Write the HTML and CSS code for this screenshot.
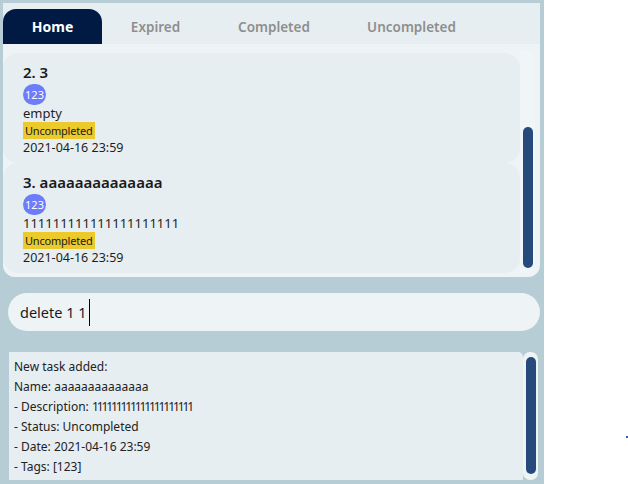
FILE: index.html
```html
<!DOCTYPE html>
<html>
<head>
<meta charset="utf-8">
<link rel="stylesheet" href="styles.css">
</head>
<body>
<div class="app">
  <div class="tabs">
    <div class="tab active w-home">Home</div>
    <div class="tab w-exp">Expired</div>
    <div class="tab w-comp">Completed</div>
    <div class="tab w-unc">Uncompleted</div>
  </div>
  <div class="list-panel">
    <div class="list">
      <div class="card first">
        <div class="title">2. 3</div>
        <div class="tags"><span class="tag">123</span></div>
        <div class="desc">empty</div>
        <div class="status"><span class="badge">Uncompleted</span></div>
        <div class="date">2021-04-16 23:59</div>
      </div>
      <div class="card">
        <div class="title">3. aaaaaaaaaaaaaa</div>
        <div class="tags"><span class="tag">123</span></div>
        <div class="desc">111111111111111111111</div>
        <div class="status"><span class="badge">Uncompleted</span></div>
        <div class="date">2021-04-16 23:59</div>
      </div>
    </div>
    <div class="list-track"><div class="list-thumb"></div></div>
  </div>
  <div class="command">
    <span class="cmd-text">delete 1 1</span><span class="caret"></span>
  </div>
  <div class="result">
    <div class="result-text">
      <div>New task added:</div>
      <div>Name: aaaaaaaaaaaaaa</div>
      <div>- Description: <span class="ones">111111111111111111111</span></div>
      <div>- Status: Uncompleted</div>
      <div>- Date: 2021-04-16 23:59</div>
      <div>- Tags: [123]</div>
    </div>
    <div class="result-track"><div class="result-thumb"></div></div>
  </div>
</div>
<div class="dot"></div>
</body>
</html>
```
FILE: styles.css
```css
html, body {
  margin: 0;
  padding: 0;
}
body {
  width: 628px;
  height: 484px;
  background: #ffffff;
  overflow: hidden;
  position: relative;
  font-family: "Noto Sans", "Open Sans", sans-serif;
}
.app {
  width: 544px;
  height: 484px;
  box-sizing: border-box;
  background: #b6cdd5;
  padding: 3px 4px 0 3px;
  display: flex;
  flex-direction: column;
}
.tabs {
  height: 41px;
  background: #e6eef1;
  display: flex;
  align-items: flex-end;
  flex-shrink: 0;
}
.tab {
  height: 35px;
  display: flex;
  align-items: center;
  justify-content: center;
  font-size: 13.5px;
  font-weight: 600;
  color: #8e8e8e;
}
.tab.active {
  background: #011a43;
  color: #ffffff;
  border-radius: 13px 13px 0 0;
  font-size: 14px;
  font-weight: 700;
}
.w-home { width: 99px; }
.w-exp { width: 107px; }
.w-comp { width: 130px; }
.w-unc { width: 145px; }

.list-panel {
  height: 233px;
  background: #eef3f6;
  border-radius: 0 0 12px 12px;
  display: flex;
  flex-shrink: 0;
  overflow: hidden;
}
.list {
  width: 517px;
  padding-top: 9px;
  box-sizing: border-box;
}
.card {
  background: #e6eef1;
  border-radius: 15px;
  height: 110px;
  box-sizing: border-box;
  padding: 9px 0 5px 20px;
  color: #1e1e1e;
}
.title {
  font-size: 15px;
  font-weight: 600;
  line-height: 20px;
  color: #1a1a1a;
}
.tags {
  margin-top: 4px;
  height: 18px;
  display: flex;
}
.tag {
  width: 23px;
  height: 21px;
  margin-top: -2px;
  border-radius: 11px;
  background: #6c7cfb;
  color: #ffffff;
  font-size: 11px;
  line-height: 21px;
  text-align: center;
}
.desc {
  font-size: 13px;
  line-height: 18px;
}
.status {
  height: 17px;
  display: flex;
}
.badge {
  background: #ecca2c;
  color: #1a1a1a;
  font-size: 11px;
  line-height: 17px;
  padding: 0 2px;
  letter-spacing: -0.2px;
}
.date {
  font-size: 12.5px;
  line-height: 18px;
}
.list-track {
  width: 15px;
  margin: 6px 0 5px 0;
  background: #f0f5f7;
  border-radius: 0 10px 10px 0;
  padding: 77px 2px 4px 3px;
  box-sizing: border-box;
}
.list-thumb {
  height: 100%;
  background: #264a7b;
  border-radius: 5px;
}

.command {
  margin: 16px 0 0 5px;
  height: 38px;
  flex-shrink: 0;
  background: #eef3f6;
  border-radius: 19px;
  display: flex;
  align-items: center;
  padding-left: 12px;
  box-sizing: border-box;
  font-size: 14.5px;
  color: #1a1a1a;
}
.caret {
  width: 1px;
  height: 27px;
  background: #000000;
  margin-left: 2px;
}

.result {
  margin: 21px 0 0 6px;
  height: 128px;
  width: 529px;
  display: flex;
  flex-shrink: 0;
}
.result-text {
  width: 514px;
  background: #e6eef1;
  border-radius: 0 5px 0 0;
  padding: 5px 0 0 5px;
  box-sizing: border-box;
  font-size: 12px;
  line-height: 20px;
  color: #222222;
}
.ones {
  letter-spacing: -2.1px;
}
.result-track {
  width: 15px;
  background: #eef3f6;
  border-radius: 7px;
  padding: 5px 2px 6px 3px;
  box-sizing: border-box;
}
.result-thumb {
  height: 100%;
  background: #264a7b;
  border-radius: 5px;
}
.dot {
  position: absolute;
  left: 626px;
  top: 436px;
  width: 2px;
  height: 2px;
  background: #3b4fd0;
}
```
